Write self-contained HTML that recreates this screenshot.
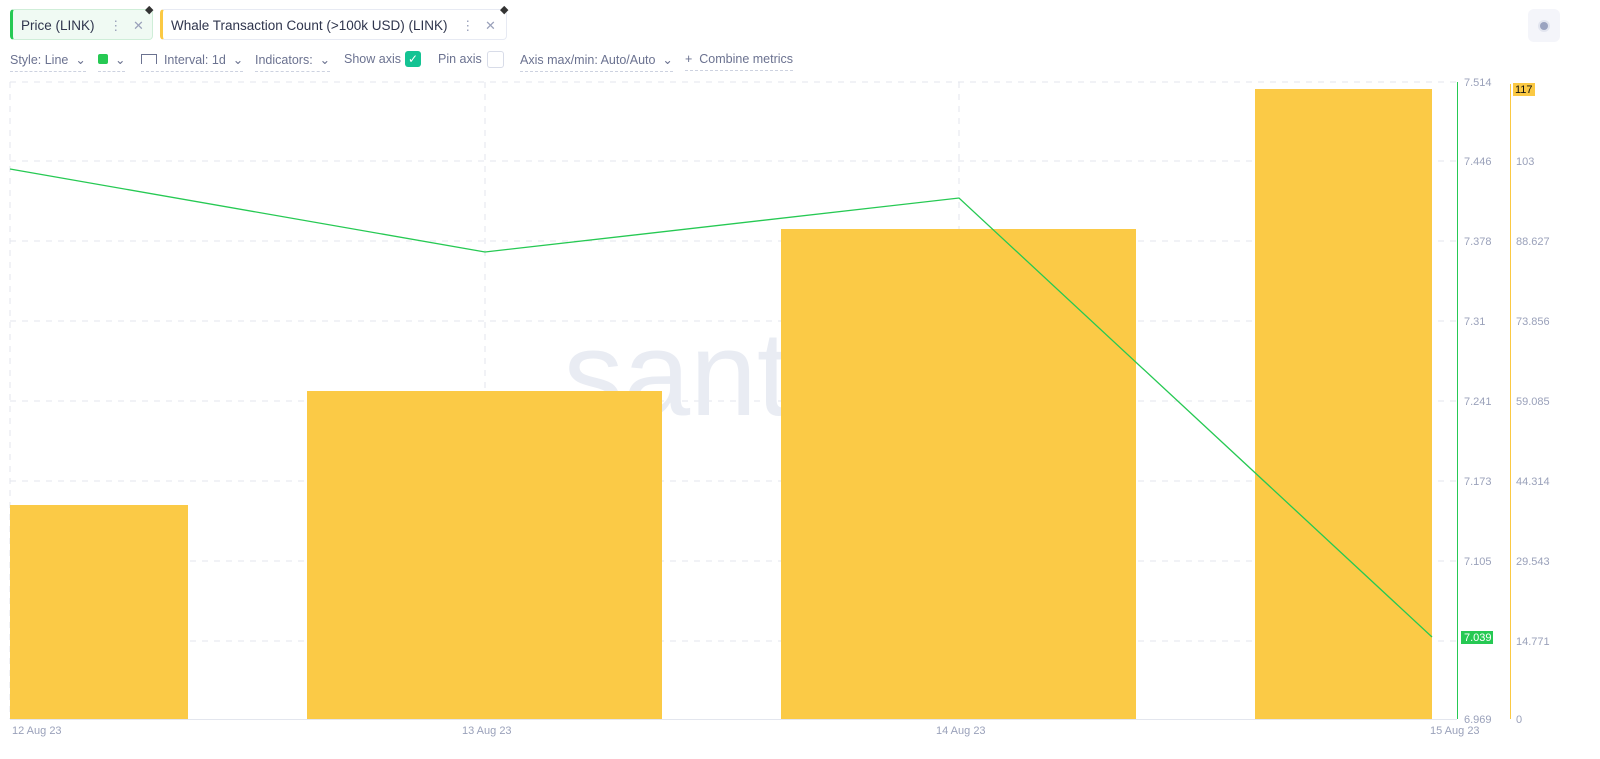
<!DOCTYPE html><html><head><style>
body{margin:0;width:1600px;height:759px;background:#fff;font-family:"Liberation Sans",sans-serif;position:relative;overflow:hidden;color:#505573}
.a{position:absolute}
.tab{position:absolute;top:9px;height:31px;border:1px solid #e7eaf3;border-radius:4px;font-size:13.5px;color:#2f354d;line-height:31px;box-sizing:border-box}
.tb{font-size:12.5px;color:#6b7290;top:52px;position:absolute;border-bottom:1px dashed #cdd2e0;padding-bottom:4px}
.yl{position:absolute;font-size:11px;color:#9aa1ba}
.xl{position:absolute;top:725px;font-size:11px;color:#9aa1ba}
</style></head><body>
<div class="tab" style="left:10px;width:143px;background:#f0faf3;border-color:#cfeed8;border-left:3px solid #26c953;padding-left:8px">Price (LINK)<span style="position:absolute;left:96px;color:#9aa1ba">⋮</span><span style="position:absolute;left:120px;color:#9aa1ba;font-size:13px">✕</span></div>
<div class="a" style="left:145px;top:3px;width:10px;height:14px;font-size:11px;color:#333">◆</div>
<div class="tab" style="left:160px;width:347px;border-left:3px solid #fbc943;padding-left:8px">Whale Transaction Count (&gt;100k USD) (LINK)<span style="position:absolute;left:298px;color:#9aa1ba">⋮</span><span style="position:absolute;left:322px;color:#9aa1ba;font-size:13px">✕</span></div>
<div class="a" style="left:500px;top:3px;font-size:11px;color:#333">◆</div>
<div class="a" style="left:1528px;top:9px;width:32px;height:33px;background:#f4f5fa;border-radius:6px"><div class="a" style="left:10px;top:11px;width:12px;height:12px;border-radius:50%;background:#e2e5ef"></div><div class="a" style="left:12px;top:13px;width:8px;height:8px;border-radius:50%;background:#9aa3c0"></div></div>
<div class="tb" style="left:10px">Style: Line &nbsp;⌄</div>
<div class="tb" style="left:98px"><span style="display:inline-block;width:10px;height:10px;background:#26c953;border-radius:2px"></span> &nbsp;⌄</div>
<div class="tb" style="left:141px"><span style="display:inline-block;width:14px;height:9px;border:1px solid #6b7290;border-bottom:none"></span> &nbsp;Interval: 1d &nbsp;⌄</div>
<div class="tb" style="left:255px">Indicators: &nbsp;⌄</div>
<div class="tb" style="left:344px;border:none">Show axis</div>
<div class="a" style="left:405px;top:51px;width:16px;height:16px;background:#14c393;border-radius:3px;color:#fff;font-size:12px;text-align:center;line-height:16px">✓</div>
<div class="tb" style="left:438px;border:none">Pin axis</div>
<div class="a" style="left:487px;top:51px;width:15px;height:15px;border:1px solid #d8dce8;border-radius:3px"></div>
<div class="tb" style="left:520px">Axis max/min: Auto/Auto &nbsp;⌄</div>
<div class="tb" style="left:685px">+ &nbsp;Combine metrics</div>
<svg class="a" style="left:0;top:0" width="1600" height="759">
<g stroke="#e3e6ee" stroke-dasharray="6,6" stroke-width="1">
<line x1="10" y1="82" x2="1457" y2="82"/><line x1="10" y1="161" x2="1457" y2="161"/><line x1="10" y1="241" x2="1457" y2="241"/><line x1="10" y1="321" x2="1457" y2="321"/><line x1="10" y1="401" x2="1457" y2="401"/><line x1="10" y1="481" x2="1457" y2="481"/><line x1="10" y1="561" x2="1457" y2="561"/><line x1="10" y1="641" x2="1457" y2="641"/>
<line x1="10" y1="82" x2="10" y2="719"/><line x1="485" y1="82" x2="485" y2="719"/><line x1="959" y1="82" x2="959" y2="719"/>
</g>
<text x="530" y="415" font-size="120" fill="#e9ecf3" font-family="Liberation Sans">.santiment</text>
<g fill="#fbca46"><rect x="10" y="505" width="178" height="214"/><rect x="307" y="391" width="355" height="328"/><rect x="781" y="229" width="355" height="490"/><rect x="1255" y="89" width="177" height="630"/></g>
<polyline points="10,169 485,252 959,198 1432,637" fill="none" stroke="#26c953" stroke-width="1.3"/>
<line x1="10" y1="719.5" x2="1457" y2="719.5" stroke="#e3e6ee"/>
<line x1="1457.5" y1="82" x2="1457.5" y2="719" stroke="#26c953"/>
<line x1="1510.5" y1="84" x2="1510.5" y2="719" stroke="#fbc943"/>
<rect x="1461" y="631" width="32" height="13" fill="#26c953"/><text x="1464" y="641" font-size="11" fill="#fff">7.039</text>
<rect x="1513" y="83" width="22" height="13" fill="#fbc943"/><text x="1515" y="93" font-size="11" fill="#111">117</text>
</svg>
<div class="yl" style="left:1464px;top:77px">7.514</div><div class="yl" style="left:1464px;top:156px">7.446</div><div class="yl" style="left:1464px;top:236px">7.378</div><div class="yl" style="left:1464px;top:316px">7.31</div><div class="yl" style="left:1464px;top:396px">7.241</div><div class="yl" style="left:1464px;top:476px">7.173</div><div class="yl" style="left:1464px;top:556px">7.105</div><div class="yl" style="left:1464px;top:714px">6.969</div>
<div class="yl" style="left:1516px;top:156px">103</div><div class="yl" style="left:1516px;top:236px">88.627</div><div class="yl" style="left:1516px;top:316px">73.856</div><div class="yl" style="left:1516px;top:396px">59.085</div><div class="yl" style="left:1516px;top:476px">44.314</div><div class="yl" style="left:1516px;top:556px">29.543</div><div class="yl" style="left:1516px;top:636px">14.771</div><div class="yl" style="left:1516px;top:714px">0</div>
<div class="xl" style="left:12px">12 Aug 23</div><div class="xl" style="left:462px">13 Aug 23</div><div class="xl" style="left:936px">14 Aug 23</div><div class="xl" style="left:1430px">15 Aug 23</div>
</body></html>
